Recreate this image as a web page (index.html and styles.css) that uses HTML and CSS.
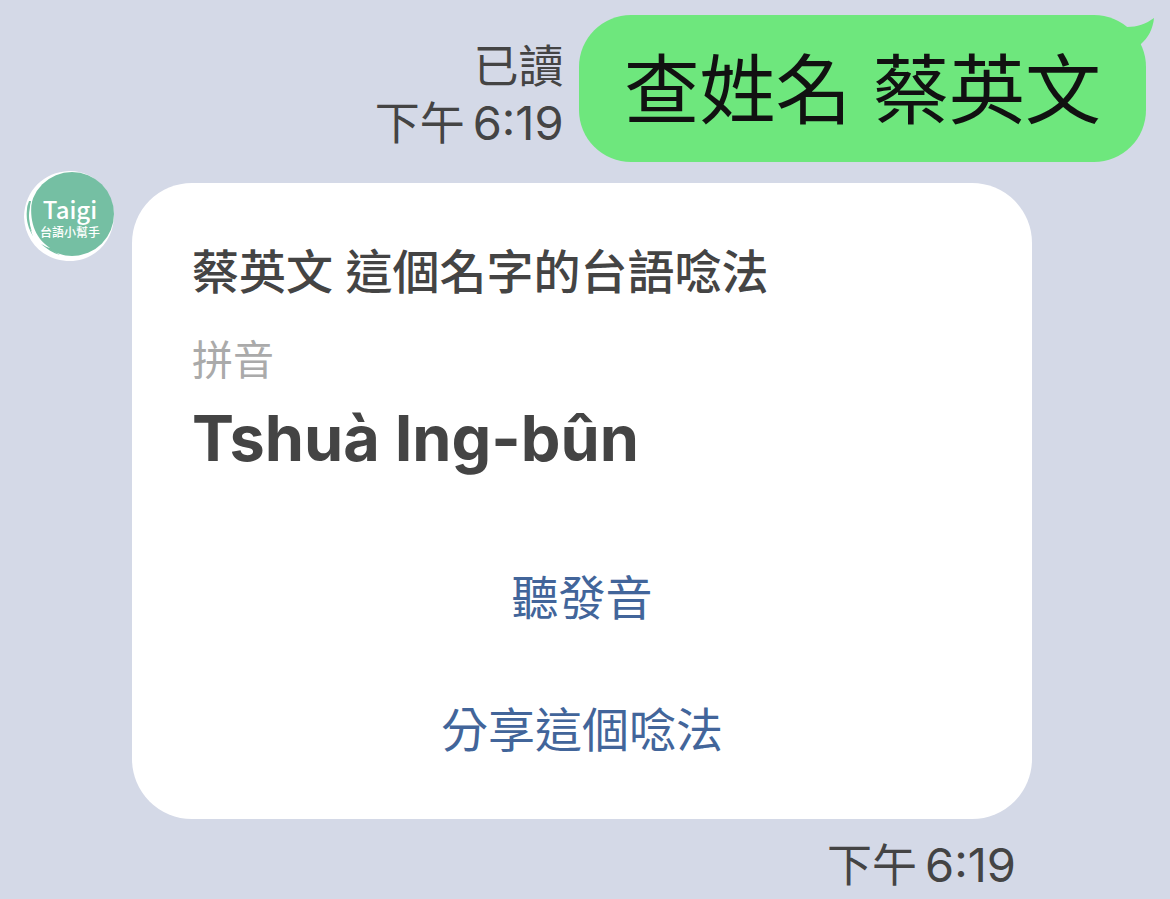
FILE: index.html
```html
<!DOCTYPE html>
<html lang="zh-Hant">
<head>
    <meta charset="UTF-8">
    <meta name="viewport" content="width=device-width, initial-scale=1.0">
    <title>Taigi 台語小幫手</title>
    <link rel="stylesheet" href="styles.css">
</head>
<body>
    <main class="chat">
        <div class="message sent">
            <div class="meta">
                <span class="read">已讀</span>
                <time><span>下午</span> <span class="clock">6:19</span></time>
            </div>
            <div class="bubble">
                查姓名 蔡英文
                <svg class="tail" viewBox="0 0 38 40" aria-hidden="true">
                    <path d="M0 18 L10 12 C20 12 29 9 37 3 C36 14 31 23 24 29 L20 36 Z" fill="#6ee77d"/>
                </svg>
            </div>
        </div>

        <div class="message received">
            <div class="avatar">
                <svg class="avatar-bg" viewBox="0 0 92 92" aria-hidden="true">
                    <path d="M45 1 C20 2 1 20 0 47 C1 73 21 91 46 91 C69 91 89 73 90 47 C90 20 68 0 45 1 Z" fill="#fff"/>
                    <circle cx="48" cy="44" r="42" fill="#75bfa3"/>
                    <path d="M5 31 C1 42 2 55 9 66 C6 54 5 43 7 31 Z" fill="#75bfa3"/>
                    <path d="M8 29 C5 50 10 67 26 78 L17 76 C5 66 2 47 8 29 Z" fill="#fff"/>
                    <path d="M4 34 C2 44 3 54 8 62 C5 53 4 44 6 33 Z" fill="#75bfa3"/>
                    <path d="M17 74 C23 79 29 83 36 85 L28 80 L19 75 Z" fill="#75bfa3"/>
                </svg>
                <span class="avatar-name">Taigi</span>
                <span class="avatar-sub">台語小幫手</span>
            </div>
            <div class="content">
                <section class="card">
                    <h1>蔡英文 這個名字的台語唸法</h1>
                    <p class="label">拼音</p>
                    <p class="pinyin">Tshuà Ing-bûn</p>
                    <div class="actions">
                        <button type="button">聽發音</button>
                        <button type="button">分享這個唸法</button>
                    </div>
                </section>
                <div class="meta">
                    <time><span>下午</span> <span class="clock">6:19</span></time>
                </div>
            </div>
        </div>
    </main>
</body>
</html>
```
FILE: styles.css
```css
* {
    box-sizing: border-box;
}
body {
    margin: 0;
    background-color: #d4d9e7;
    color: #444;
    font-family: Inter, "Noto Sans CJK TC", sans-serif;
}
h1, p {
    margin: 0;
}
.chat {
    padding: 15px 24px 0;
}
.message {
    display: flex;
}
.sent {
    justify-content: flex-end;
    gap: 15px;
}
.meta {
    display: flex;
    flex-direction: column;
    align-items: flex-end;
    font-size: 45px;
    line-height: 56px;
}
.meta time {
    display: flex;
    align-items: baseline;
    gap: 8px;
}
.clock {
    font-size: 47px;
}
.sent .meta {
    padding-top: 24px;
}
.bubble {
    position: relative;
    padding: 30px 45px 26px;
    border-radius: 52px;
    background-color: #6ee77d;
    color: #111;
    font-size: 76px;
    line-height: 91px;
}
.tail {
    position: absolute;
    top: 0;
    right: -9px;
    width: 38px;
    height: 40px;
}
.received {
    gap: 16px;
    margin-top: 21px;
    padding-right: 114px;
}
.avatar {
    position: relative;
    flex: none;
    display: flex;
    flex-direction: column;
    align-items: center;
    width: 92px;
    height: 92px;
    margin-top: -13px;
    padding-top: 23px;
    color: #fff;
}
.avatar-bg {
    position: absolute;
    inset: 0;
}
.avatar-name {
    position: relative;
    font-family: "Noto Sans CJK TC", sans-serif;
    font-size: 24px;
    font-weight: 500;
    line-height: 32px;
}
.avatar-sub {
    position: relative;
    font-size: 12px;
    font-weight: 500;
    line-height: 16px;
}
.content {
    flex: 1;
}
.card {
    padding: 60px 60px 43px;
    border-radius: 60px;
    background-color: #fff;
}
.card h1 {
    font-size: 47px;
    font-weight: 500;
    line-height: 58px;
}
.label {
    margin-top: 34px;
    color: #aaa;
    font-size: 41px;
    line-height: 50px;
}
.pinyin {
    margin-top: 14px;
    font-size: 63px;
    font-weight: 700;
    line-height: 78px;
}
.actions {
    display: flex;
    flex-direction: column;
    gap: 32px;
    margin-top: 67px;
}
button {
    height: 100px;
    padding: 0;
    border: none;
    background: none;
    color: #42659a;
    font-family: inherit;
    font-size: 47px;
    cursor: pointer;
}
.content .meta {
    padding: 18px 16px 0;
}
```
